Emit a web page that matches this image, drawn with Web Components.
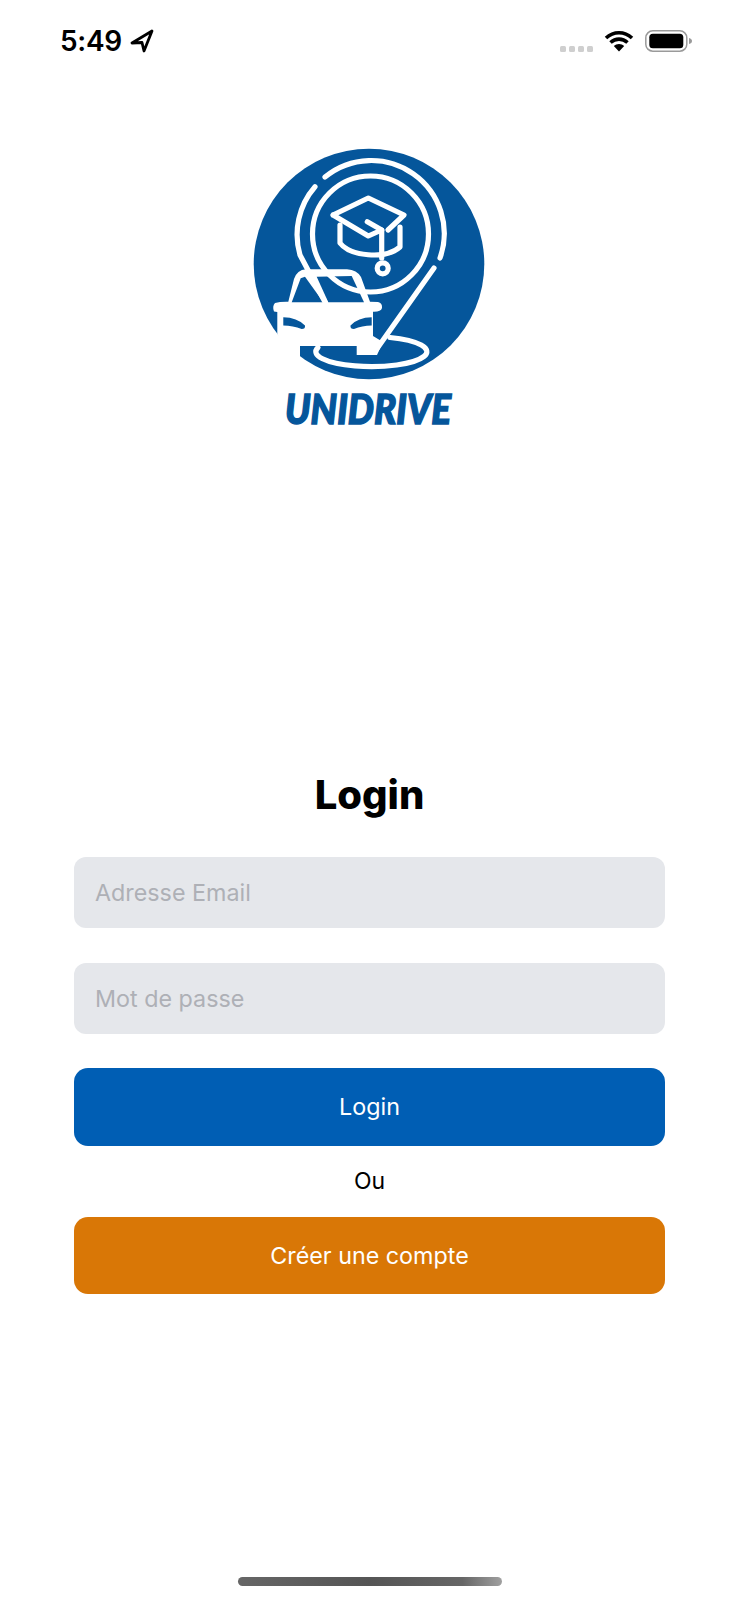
<!DOCTYPE html>
<html lang="fr">
<head>
<meta charset="utf-8">
<title>Unidrive</title>
<style>
    html, body { margin: 0; padding: 0; background: #fff; }
    body { font-family: Inter, "Liberation Sans", sans-serif; }
    #app { display: flex; flex-direction: column; height: 1600px; overflow: hidden; }
</style>
</head>
<body>
<div id="app">
    <status-bar time="5:49"></status-bar>
    <app-logo></app-logo>
    <login-form></login-form>
    <home-indicator></home-indicator>
</div>

<template id="status-bar-tpl">
    <style>
        :host {
            display: flex;
            align-items: center;
            justify-content: space-between;
            height: 82px;
            padding: 0 46px 0 60px;
            box-sizing: border-box;
            flex: none;
        }
        .left, .right { display: flex; align-items: center; }
        .time {
            font-size: 28px;
            font-weight: 600;
            line-height: 32px;
            letter-spacing: -0.3px;
            color: #000;
        }
        .arrow { margin-left: 8px; }
        .dots { display: flex; gap: 3px; margin: 15px 11px 0 0; }
        .dots i { width: 6px; height: 6px; border-radius: 1.5px; background: #cfcfcf; }
        .battery { margin-left: 11px; }
    </style>
    <div class="left">
        <span class="time"></span>
        <svg class="arrow" width="24" height="24" viewBox="0 0 24 24"><path d="M22 2 L2 14 L12 13.500 L14 22 Z" fill="none" stroke="#000" stroke-width="2.800" stroke-linejoin="round"/></svg>
    </div>
    <div class="right">
        <div class="dots"><i></i><i></i><i></i><i></i></div>
        <svg width="30" height="22" viewBox="0 0 30 22"><path d="M2 8 C9.500 1 20.500 1 28 8 M6.500 12.500 C11.500 8 18.500 8 23.500 12.500" fill="none" stroke="#000" stroke-width="3.600"/><path d="M15 21.500 L9.800 16 C12.500 13.200 17.500 13.200 20.200 16 Z" fill="#000"/></svg>
        <svg class="battery" width="48" height="22" viewBox="0 0 48 22"><rect x="0.800" y="0.800" width="41" height="20.400" rx="7" fill="none" stroke="#9a9a9a" stroke-width="1.500"/><rect x="4.300" y="3.800" width="34" height="14.400" rx="3.500" fill="#000"/><path d="M44 8 C46 8.500 47 9.500 47 11 C47 12.500 46 13.500 44 14 Z" fill="#9a9a9a"/></svg>
    </div>
</template>

<template id="app-logo-tpl">
    <style>
        :host {
            display: flex;
            justify-content: center;
            flex: none;
            padding: 53px 0 0 0;
        }
        svg { display: block; width: 260px; height: 300px; }
        .brand {
            font-family: Lato, Roboto, "Liberation Sans", sans-serif;
            font-weight: 900;
            font-style: italic;
            font-size: 41px;
        }
    </style>
    <svg viewBox="240 135 260 300">
        <circle cx="369" cy="264" r="115.300" fill="#05569b"/>
        <!-- car body -->
        <path d="M288.300 301.700 L294 279 Q297 270 306 269.300 L347 269.300 Q357 270 361 277 L370 301.700 L378 302 Q382.500 303 382 308 Q381 312 373 311.700 L373 336 L383 342 L377 355 L356.700 355 L356.700 346 L300 346 L300 358 L285 350 L277.300 334 L277.300 312 L274 311.500 Q272 306 275 303 Q280 301.500 288.300 301.700 Z" fill="#fff"/>
        <g fill="#05569b">
            <path d="M291.700 302.300 L300.700 278.300 L305 276.700 L323.300 302.300 Z"/>
            <path d="M316.700 276.700 L351.700 276 L364 302.300 L328.300 302.300 Z"/>
            <path d="M283.300 317.300 Q297 317.500 305 325.500 Q305.500 329 301.700 329 Q293 325.500 283.300 325.500 Z"/>
            <path d="M371.700 317.300 Q358 317.500 350.500 325.500 Q350 329 354 329 Q362 325.500 371.700 325.500 Z"/>
        </g>
        <g fill="none" stroke="#fff" stroke-width="5.200" stroke-linecap="round" stroke-linejoin="round">
            <!-- outer ring, split in two -->
            <path d="M325 177 A73 73 0 0 1 440 258"/>
            <path d="M315 186.700 A73 73 0 0 0 300 255 L325 302"/>
            <!-- inner ring -->
            <circle cx="370.500" cy="234" r="58"/>
            <!-- pin tail and ground ellipse -->
            <path d="M434 268 L376 350"/>
            <path d="M390 337.500 A55.500 15 0 1 1 318 347.500"/>
            <!-- cap -->
            <path d="M333 215 L368.300 198 L404 215 L388 230 M333 215 L368.300 236 L381.700 230 L367.300 221.700"/>
            <path d="M340 225 L340 243 C350 256 385 260 400 247 L400 227"/>
            <path d="M381.700 230 L381.700 258"/>
            <circle cx="382.700" cy="268.300" r="5.500"/>
        </g>
        <text class="brand" x="285" y="423.500" fill="#05569b" stroke="#05569b" stroke-width="1.500" textLength="166" lengthAdjust="spacingAndGlyphs">UNIDRIVE</text>
    </svg>
</template>

<template id="login-form-tpl">
    <style>
        :host {
            display: flex;
            flex-direction: column;
            padding: 336px 74px 0 74px;
            flex: none;
        }
        h1 {
            margin: 0 0 38px;
            font-size: 40px;
            line-height: 48px;
            font-weight: 800;
            color: #000;
            text-align: center;
        }
        .or {
            height: 71px;
            display: flex;
            align-items: center;
            justify-content: center;
            font-size: 23px;
            color: #000;
        }
        text-field { margin-bottom: 34.500px; }
    </style>
    <h1>Login</h1>
    <text-field>Adresse Email</text-field>
    <text-field>Mot de passe</text-field>
    <action-button color="#005eb4">Login</action-button>
    <div class="or">Ou</div>
    <action-button color="#d97706">Créer une compte</action-button>
</template>

<template id="text-field-tpl">
    <style>
        :host {
            display: flex;
            align-items: center;
            height: 71px;
            padding: 0 21px;
            box-sizing: border-box;
            background: #e5e7eb;
            border-radius: 12px;
            color: #aeb0b6;
            font-size: 23.300px;
        }
    </style>
    <slot></slot>
</template>

<template id="action-button-tpl">
    <style>
        :host {
            display: flex;
            align-items: center;
            justify-content: center;
            height: 77.500px;
            border-radius: 14px;
            color: #fff;
            font-size: 23.300px;
            background: var(--btn-color, #005eb4);
        }
    </style>
    <slot></slot>
</template>

<template id="home-indicator-tpl">
    <style>
        :host {
            display: flex;
            justify-content: center;
            margin-top: auto;
            padding-bottom: 14px;
            flex: none;
        }
        .bar {
            width: 264px;
            height: 9px;
            border-radius: 5px;
            background: linear-gradient(90deg, #666 0%, #555 50%, #666 85%, #a0a0a0 100%);
        }
    </style>
    <div class="bar"></div>
</template>

<script>
    function tplRoot(el, id) {
        var root = el.attachShadow({mode: 'open'});
        root.appendChild(document.getElementById(id).content.cloneNode(true));
        return root;
    }
    customElements.define('status-bar', class extends HTMLElement {
        constructor() {
            super();
            var root = tplRoot(this, 'status-bar-tpl');
            root.querySelector('.time').textContent = this.getAttribute('time');
        }
    });
    customElements.define('app-logo', class extends HTMLElement {
        constructor() { super(); tplRoot(this, 'app-logo-tpl'); }
    });
    customElements.define('text-field', class extends HTMLElement {
        constructor() { super(); tplRoot(this, 'text-field-tpl'); }
    });
    customElements.define('action-button', class extends HTMLElement {
        constructor() { super(); tplRoot(this, 'action-button-tpl'); }
        connectedCallback() {
            this.style.setProperty('--btn-color', this.getAttribute('color'));
        }
    });
    customElements.define('login-form', class extends HTMLElement {
        constructor() { super(); tplRoot(this, 'login-form-tpl'); }
    });
    customElements.define('home-indicator', class extends HTMLElement {
        constructor() { super(); tplRoot(this, 'home-indicator-tpl'); }
    });
</script>
</body>
</html>
